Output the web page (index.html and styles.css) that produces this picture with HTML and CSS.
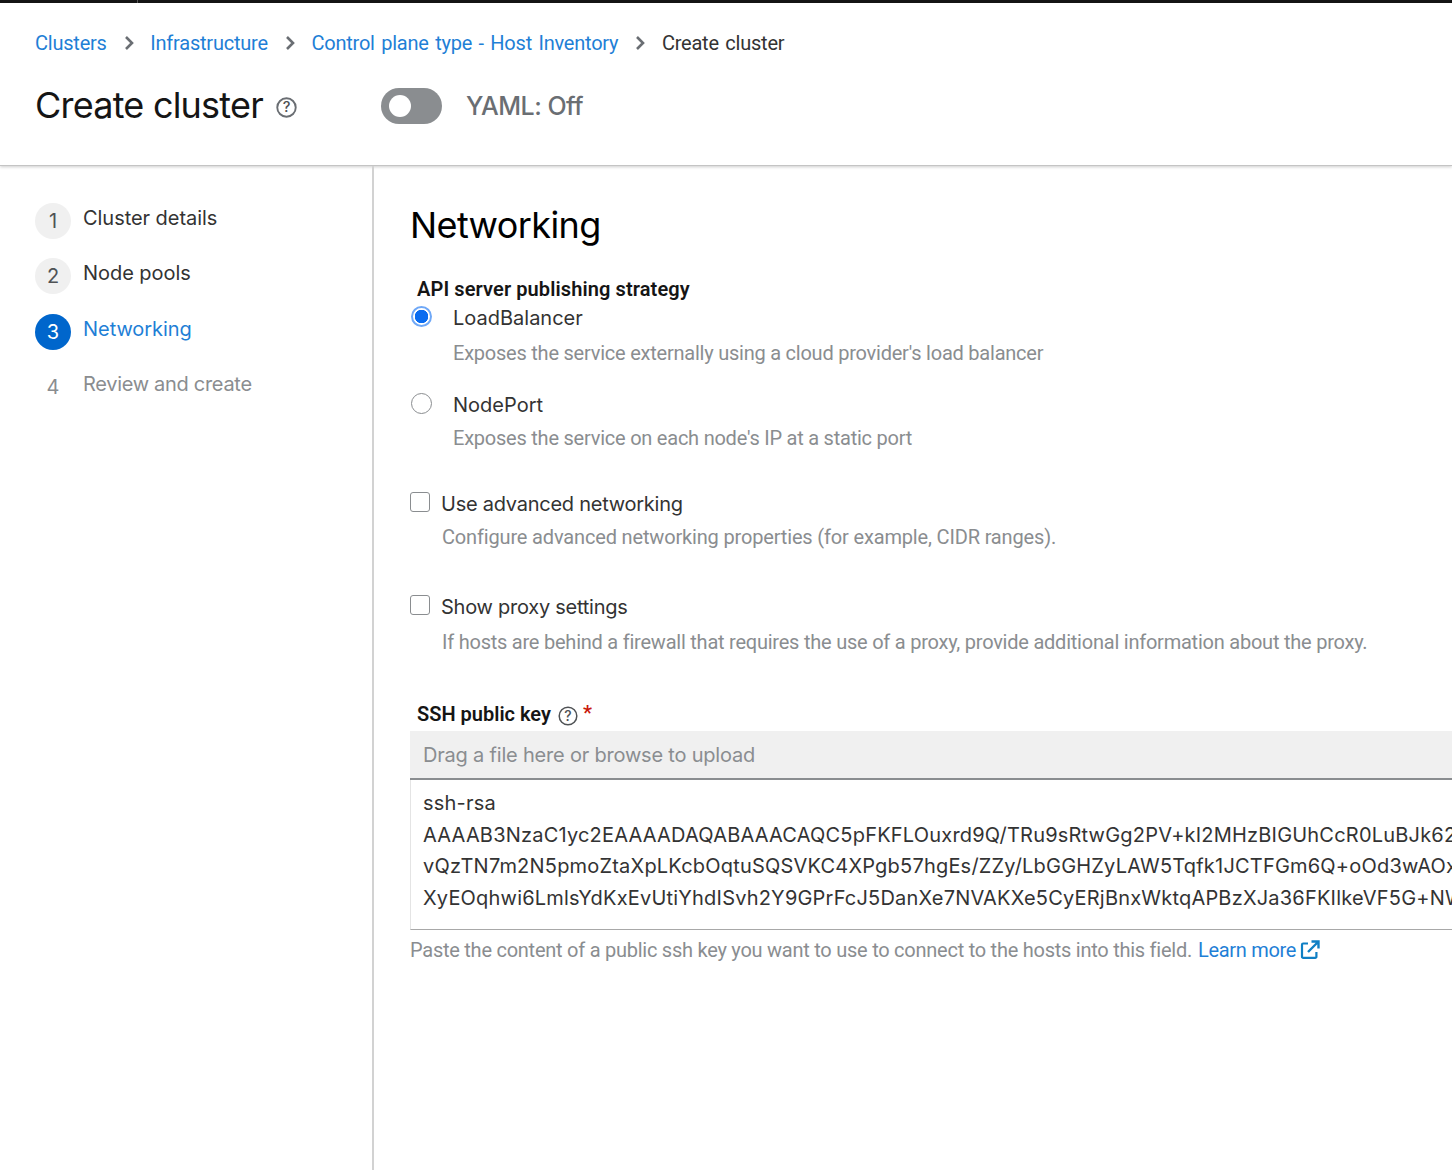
FILE: index.html
```html
<!DOCTYPE html>
<html lang="en">
<head>
<meta charset="utf-8">
<title>Create cluster</title>
<link rel="stylesheet" href="styles.css">
</head>
<body>
<div class="topbar"><span class="topbar-divider"></span></div>
<header class="page-header">
  <nav class="breadcrumb">
    <a class="crumb">Clusters</a>
    <svg class="chev" viewBox="0 0 10 16"><path d="M2 2l6 6-6 6" fill="none" stroke="#6a6e73" stroke-width="2.6"/></svg>
    <a class="crumb">Infrastructure</a>
    <svg class="chev" viewBox="0 0 10 16"><path d="M2 2l6 6-6 6" fill="none" stroke="#6a6e73" stroke-width="2.6"/></svg>
    <a class="crumb">Control plane type - Host Inventory</a>
    <svg class="chev" viewBox="0 0 10 16"><path d="M2 2l6 6-6 6" fill="none" stroke="#6a6e73" stroke-width="2.6"/></svg>
    <span class="crumb-current">Create cluster</span>
  </nav>
  <div class="title-row">
    <h1 class="title">Create cluster</h1>
    <svg class="help help-title" viewBox="0 0 20 20"><circle cx="10" cy="10" r="8.8" fill="none" stroke="#6a6e73" stroke-width="1.8"/><text x="10" y="14.4" text-anchor="middle" class="help-q">?</text></svg>
    <span class="toggle"><span class="knob"></span></span>
    <span class="toggle-label">YAML: Off</span>
  </div>
</header>
<div class="body-row">
  <aside class="steps">
    <div class="step"><span class="num done">1</span><span class="step-label">Cluster details</span></div>
    <div class="step"><span class="num done">2</span><span class="step-label">Node pools</span></div>
    <div class="step current"><span class="num active">3</span><span class="step-label">Networking</span></div>
    <div class="step pending"><span class="num">4</span><span class="step-label">Review and create</span></div>
  </aside>
  <main class="content">
    <h2 class="section-title">Networking</h2>
    <div class="group-label">API server publishing strategy</div>
    <div class="radio-row r1"><span class="radio checked"></span><span class="opt-label">LoadBalancer</span></div>
    <div class="desc radio-desc d1">Exposes the service externally using a cloud provider's load balancer</div>
    <div class="radio-row r2"><span class="radio"></span><span class="opt-label">NodePort</span></div>
    <div class="desc radio-desc d2">Exposes the service on each node's IP at a static port</div>
    <div class="check-row c-adv"><span class="check"></span><span class="opt-label">Use advanced networking</span></div>
    <div class="desc check-desc d3">Configure advanced networking properties (for example, CIDR ranges).</div>
    <div class="check-row c-proxy"><span class="check"></span><span class="opt-label">Show proxy settings</span></div>
    <div class="desc check-desc d4">If hosts are behind a firewall that requires the use of a proxy, provide additional information about the proxy.</div>
    <div class="ssh-label"><span class="ssh-text">SSH public key</span>
      <svg class="help help-ssh" viewBox="0 0 20 20"><circle cx="10" cy="10" r="8.8" fill="none" stroke="#4f5255" stroke-width="1.5"/><text x="10" y="14.6" text-anchor="middle" class="help-q">?</text></svg>
      <span class="req">*</span></div>
    <div class="upload">Drag a file here or browse to upload</div>
    <div class="keybox">
      <div>ssh-rsa</div>
      <div>AAAAB3NzaC1yc2EAAAADAQABAAACAQC5pFKFLOuxrd9Q/TRu9sRtwGg2PV+kI2MHzBIGUhCcR0LuBJk62xQ</div>
      <div>vQzTN7m2N5pmoZtaXpLKcbOqtuSQSVKC4XPgb57hgEs/ZZy/LbGGHZyLAW5Tqfk1JCTFGm6Q+oOd3wAOxQ</div>
      <div>XyEOqhwi6LmlsYdKxEvUtiYhdISvh2Y9GPrFcJ5DanXe7NVAKXe5CyERjBnxWktqAPBzXJa36FKIlkeVF5G+NW4xQ</div>
    </div>
    <div class="helper"><span class="helper-text">Paste the content of a public ssh key you want to use to connect to the hosts into this field.</span><a class="learn">Learn more</a>
      <svg class="ext" viewBox="0 0 20 20"><path d="M8 3.5H3.2a1.2 1.2 0 0 0-1.2 1.2v12a1.2 1.2 0 0 0 1.2 1.2h12a1.2 1.2 0 0 0 1.2-1.2V12" fill="none" stroke="#0f7fc4" stroke-width="2.2"/><path d="M11.5 1.5h7v7M18 2L8 12" fill="none" stroke="#0f7fc4" stroke-width="2.4"/></svg>
    </div>
  </main>
</div>
</body>
</html>
```
FILE: styles.css
```css
* { box-sizing: border-box; }
html, body { margin: 0; height: 1170px; overflow: hidden; background: #fff; }
body { font-family: "Inter", "Liberation Sans", sans-serif; font-size: 20px; color: #151515; width: 1452px; }
.topbar { height: 3px; background: #151515; display: flex; }
.topbar-divider { width: 138px; height: 3px; border-right: 1px solid #555; }
.page-header { height: 163px; border-bottom: 1px solid #c4c4c4; box-shadow: 0 1px 3px rgba(0,0,0,.2); padding: 27px 35px 0; }
.breadcrumb { display: flex; align-items: center; height: 26px; font-family: "Roboto", sans-serif; font-size: 20px; letter-spacing: -0.22px; word-spacing: 1.7px; }
.crumb { color: #1f7fd6; }
.crumb-current { color: #333; }
.chev { width: 10px; height: 16px; margin: 0 16.8px; }
.title-row { display: flex; align-items: center; margin-top: 26px; }
.title { font-size: 36px; font-weight: 400; margin: 0 0 2px; line-height: 46px; letter-spacing: -0.78px; }
.help { flex: none; }
.help-title { width: 21px; height: 21px; margin-left: 13px; margin-top: 2px; }
.help-q { font-size: 14px; font-family: "Inter", sans-serif; font-weight: 500; fill: #4f5255; }
.toggle { width: 61px; height: 36px; border-radius: 18px; background: #8a8d90; margin-left: 84px; position: relative; flex: none; }
.knob { position: absolute; left: 8px; top: 7px; width: 22px; height: 22px; background: #fff; border-radius: 50%; }
.toggle-label { color: #6a6e73; font-weight: 500; font-size: 25px; margin-left: 24px; letter-spacing: -0.5px; }
.body-row { display: flex; height: 1004px; }
.steps { width: 374px; flex: none; border-right: 2px solid #d2d2d2; padding: 37px 35px 0; }
.step { display: flex; height: 55.4px; color: #333; }
.num { width: 36px; height: 36px; border-radius: 50%; display: flex; align-items: center; justify-content: center; flex: none; margin-right: 12px; color: #4f5255; }
.done { background: #f0f0f0; }
.active { background: #0066cc; color: #fff; }
.step-label { line-height: 36px; margin-top: -3px; letter-spacing: -0.05px; }
.current .step-label { color: #1f7fd6; }
.pending { color: #8a8d90; }
.pending .num { color: #8a8d90; }
.pending .step-label { letter-spacing: -0.3px; }
.content { padding-left: 36px; width: 1300px; flex: none; }
.section-title { font-size: 36px; font-weight: 400; margin: 35px 0 0; line-height: 48px; letter-spacing: -0.6px; color: #000; }
.group-label { font-family: "Roboto", sans-serif; font-weight: 600; margin: 27px 0 0 7px; line-height: 26px; font-size: 20px; letter-spacing: 0.1px; }
.radio-row, .check-row { display: flex; align-items: center; height: 26px; }
.radio-row .opt-label { margin-left: 21px; color: #333; }
.radio { width: 21px; height: 21px; border: 1.5px solid #8a8d90; border-radius: 50%; background: #fff; flex: none; margin: -4px 0 0 1px; }
.radio.checked { border: 2px solid #6fa8f7; background: radial-gradient(circle, #0a6cf0 0 6.5px, #fff 7px); }
.r1 { margin-top: 3px; }
.r2 { margin-top: 26px; }
.desc { font-family: "Roboto", sans-serif; color: #8a8d90; line-height: 26px; letter-spacing: -0.23px; }
.radio-desc { margin-left: 43px; }
.d1 { margin-top: 9px; }
.d2 { margin-top: 7px; }
.check { width: 20px; height: 20px; border: 1.5px solid #8a8d90; border-radius: 3px; flex: none; margin-top: -4px; }
.check-row .opt-label { margin-left: 11px; color: #333; letter-spacing: -0.25px; }
.c-adv { margin-top: 40px; }
.c-proxy { margin-top: 44px; }
.check-desc { margin-left: 32px; }
.d3 { margin-top: 7px; letter-spacing: -0.16px; }
.d4 { margin-top: 9px; }
.ssh-label { display: flex; align-items: center; margin: 46px 0 0 7px; height: 26px; font-family: "Roboto", sans-serif; font-weight: 600; }
.help-ssh { width: 20px; height: 20px; margin: 4px 0 0 7px; }
.req { color: #c9190b; margin-left: 5px; margin-top: -3px; }
.upload { background: #f0f0f0; height: 49px; border-bottom: 2px solid #8a8d90; color: #8a8d90; padding: 11px 13px 0; margin-top: 4px; line-height: 26px; letter-spacing: -0.2px; }
.keybox { height: 150px; border-left: 1px solid #e4e4e4; border-bottom: 1.5px solid #a8a8a8; padding: 8px 12px 0; white-space: nowrap; line-height: 31.5px; color: #333; letter-spacing: 0.2px; }
.helper { font-family: "Roboto", sans-serif; color: #8a8d90; margin-top: 7px; line-height: 26px; display: flex; align-items: center; white-space: pre; letter-spacing: -0.25px; }
.learn { color: #1f7fd6; margin-left: 6px; letter-spacing: -0.3px; }
.ext { width: 20px; height: 20px; margin-left: 4px; }
```
